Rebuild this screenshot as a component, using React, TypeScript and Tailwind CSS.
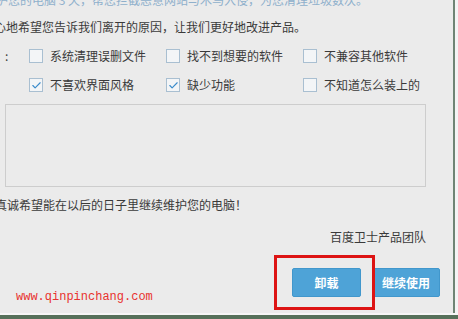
import { Check } from "lucide-react";

const font = { fontFamily: '"Noto Sans CJK SC", "Noto Sans", sans-serif' };

const reasons = [
  { label: "系统清理误删文件", checked: false },
  { label: "找不到想要的软件", checked: false },
  { label: "不兼容其他软件", checked: false },
  { label: "不喜欢界面风格", checked: true },
  { label: "缺少功能", checked: true },
  { label: "不知道怎么装上的", checked: false },
];

function Box({ checked }: { checked: boolean }) {
  return (
    <span className="w-[14px] h-[14px] shrink-0 border border-[#a9bfd1] bg-[#f3f5f7] flex items-center justify-center">
      {checked && <Check className="w-[11px] h-[11px] text-[#3b8ccb]" strokeWidth={2.5} />}
    </span>
  );
}

export default function App() {
  return (
    <div className="w-[458px] h-[319px] overflow-hidden bg-[#f2f2f2] flex flex-col" style={font}>
      <div className="flex h-[313px]">
        <div className="relative w-[453px] h-full bg-[#ebebeb] flex flex-col text-[12px] leading-[16px] text-[#3a3a3a] overflow-hidden">
          <p className="-mt-[8px] -ml-[4px] whitespace-nowrap text-[#8fb0cc] h-[16px]">
            护您的电脑 3 天，帮您拦截恶意网站与木马入侵，为您清理垃圾数次。
          </p>

          <p className="mt-[11px] -ml-[6px] whitespace-nowrap">
            心地希望您告诉我们离开的原因，让我们更好地改进产品。
          </p>

          <div className="mt-[13px] flex">
            <span className="w-[29px] pl-[5px]">:</span>
            <div className="grid grid-cols-[137px_137px_137px] gap-y-[13px]">
              {reasons.map((r) => (
                <label key={r.label} className="flex items-center gap-[7px] h-[16px] whitespace-nowrap">
                  <Box checked={r.checked} />
                  <span>{r.label}</span>
                </label>
              ))}
            </div>
          </div>

          <div className="mt-[11px] ml-[5px] w-[421px] h-[83px] border border-[#cdcdcd] bg-[#ebebeb]" />

          <p className="mt-[10px] -ml-[5px] whitespace-nowrap">
            真诚希望能在以后的日子里继续维护您的电脑！
          </p>

          <div className="mt-[16px] w-[426px] flex justify-end">
            <span>百度卫士产品团队</span>
          </div>

          <div className="mt-[23px] w-[440px] flex justify-end gap-[11px]">
            <button
              type="button"
              className="w-[69px] h-[29px] rounded-[2px] bg-[#4ea3d7] border border-[#4197cc] text-white font-bold text-[12px]"
            >
              卸载
            </button>
            <button
              type="button"
              className="w-[68px] h-[29px] rounded-[2px] bg-[#4ea3d7] border border-[#4197cc] text-white font-bold text-[12px]"
            >
              继续使用
            </button>
          </div>

          <span
            className="absolute left-[16px] top-[289px] text-[12px] leading-[16px] text-[#e8322f]"
            style={{ fontFamily: '"Liberation Mono", monospace' }}
          >
            www.qinpinchang.com
          </span>

          <div className="absolute left-[274px] top-[255px] w-[101px] h-[55px] border-[3px] border-[#dd1414]" />
        </div>
        <div className="w-[2px] h-full bg-[#6f8474]" />
        <div className="flex-1 h-full bg-[#f4f4f4]" />
      </div>
      <div className="h-[2px] bg-[#f6f6f6]" />
      <div className="flex-1 bg-[#56705a]" />
    </div>
  );
}
